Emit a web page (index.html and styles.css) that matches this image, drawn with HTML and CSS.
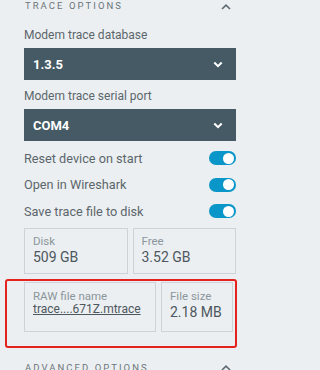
FILE: index.html
```html
<!DOCTYPE html>
<html lang="en">
<head>
<meta charset="utf-8">
<title>Trace options</title>
<link rel="stylesheet" href="styles.css">
</head>
<body>
<div class="panel">
  <div class="section-head">
    <span class="section-title">TRACE OPTIONS</span>
    <svg class="chev" width="10" height="6" viewBox="0 0 10 6"><path d="M1 5 L5 1.2 L9 5" fill="none" stroke="#5f6b72" stroke-width="1.7"/></svg>
  </div>

  <div class="field-label first">Modem trace database</div>
  <div class="select">
    <span>1.3.5</span>
    <svg width="10" height="7" viewBox="0 0 10 7"><path d="M1.3 1.5 L5 5.2 L8.7 1.5" fill="none" stroke="#fff" stroke-width="2"/></svg>
  </div>

  <div class="field-label">Modem trace serial port</div>
  <div class="select">
    <span>COM4</span>
    <svg width="10" height="7" viewBox="0 0 10 7"><path d="M1.3 1.5 L5 5.2 L8.7 1.5" fill="none" stroke="#fff" stroke-width="2"/></svg>
  </div>

  <div class="toggles">
    <div class="toggle-row"><span>Reset device on start</span><span class="switch"></span></div>
    <div class="toggle-row"><span>Open in Wireshark</span><span class="switch"></span></div>
    <div class="toggle-row"><span>Save trace file to disk</span><span class="switch"></span></div>
  </div>

  <div class="stats">
    <div class="stat">
      <div class="stat-label">Disk</div>
      <div class="stat-value">509 GB</div>
    </div>
    <div class="stat">
      <div class="stat-label">Free</div>
      <div class="stat-value">3.52 GB</div>
    </div>
  </div>

  <div class="file-row">
    <div class="stat name">
      <div class="stat-label">RAW file name</div>
      <a class="stat-link" href="#">trace....671Z.mtrace</a>
    </div>
    <div class="stat size">
      <div class="stat-label">File size</div>
      <div class="stat-value">2.18 MB</div>
    </div>
  </div>

  <div class="section-head advanced">
    <span class="section-title">ADVANCED OPTIONS</span>
    <svg class="chev" width="10" height="6" viewBox="0 0 10 6"><path d="M1 5 L5 1.2 L9 5" fill="none" stroke="#5f6b72" stroke-width="1.7"/></svg>
  </div>
</div>
</body>
</html>
```

FILE: styles.css
```css
html, body {
  margin: 0;
  padding: 0;
  background: #eceff1;
  overflow: hidden;
}

.panel {
  width: 258px;
  box-sizing: border-box;
  padding: 0 22px 0 24px;
  font-family: Roboto, "Liberation Sans", sans-serif;
  color: #5b666c;
}

.section-head {
  display: flex;
  align-items: center;
  justify-content: space-between;
  height: 12px;
  padding-left: 1px;
}

.section-title {
  font-size: 9.5px;
  line-height: 12px;
  letter-spacing: 2.05px;
  color: #6b767c;
}

.chev {
  margin-right: 5px;
  margin-top: 1px;
}

.field-label {
  font-size: 12px;
  line-height: 16px;
  margin-top: 8px;
  margin-bottom: 5px;
  color: #5b666c;
}

.field-label.first {
  margin-top: 15px;
}

.select {
  height: 32px;
  background: #455a64;
  color: #fff;
  display: flex;
  align-items: center;
  justify-content: space-between;
  padding: 0 13px 0 9px;
  font-size: 13px;
  font-weight: bold;
}

.select svg {
  margin-top: 1px;
}

.toggles {
  margin-top: 4px;
}

.toggle-row {
  height: 26.5px;
  display: flex;
  align-items: center;
  justify-content: space-between;
  font-size: 12.7px;
  color: #5b666c;
}

.switch {
  position: relative;
  width: 27px;
  height: 14px;
  border-radius: 7px;
  background: #0a96c8;
  margin-right: 0;
}

.switch::after {
  content: "";
  position: absolute;
  right: 2px;
  top: 1.5px;
  width: 11px;
  height: 11px;
  border-radius: 50%;
  background: #fff;
}

.stats {
  display: grid;
  grid-template-columns: 1fr 1fr;
  gap: 5px;
  margin-top: 3.5px;
}

.stat {
  border: 1px solid #cdd3d7;
  padding: 5px 8px 6px 8px;
}

.stat-label {
  font-size: 11.5px;
  line-height: 14px;
  color: #8b969c;
}

.stat-value {
  font-size: 14px;
  line-height: 19px;
  color: #4c575e;
}

.file-row {
  position: relative;
  display: flex;
  gap: 5px;
  margin-top: 8px;
}

.file-row::before {
  content: "";
  position: absolute;
  left: -19px;
  top: -3px;
  right: -1px;
  bottom: -16px;
  border: 2px solid #e4231f;
  border-radius: 3px;
  pointer-events: none;
}

.file-row .stat {
  padding-top: 6px;
  padding-bottom: 9px;
}

.name {
  flex: 0 0 132px;
  box-sizing: border-box;
}

.size {
  flex: 0 0 72px;
  box-sizing: border-box;
}

.stat-link {
  display: block;
  font-size: 12px;
  line-height: 13px;
  color: #4c575e;
  text-decoration: underline;
}

.advanced {
  margin-top: 29.5px;
}
```
